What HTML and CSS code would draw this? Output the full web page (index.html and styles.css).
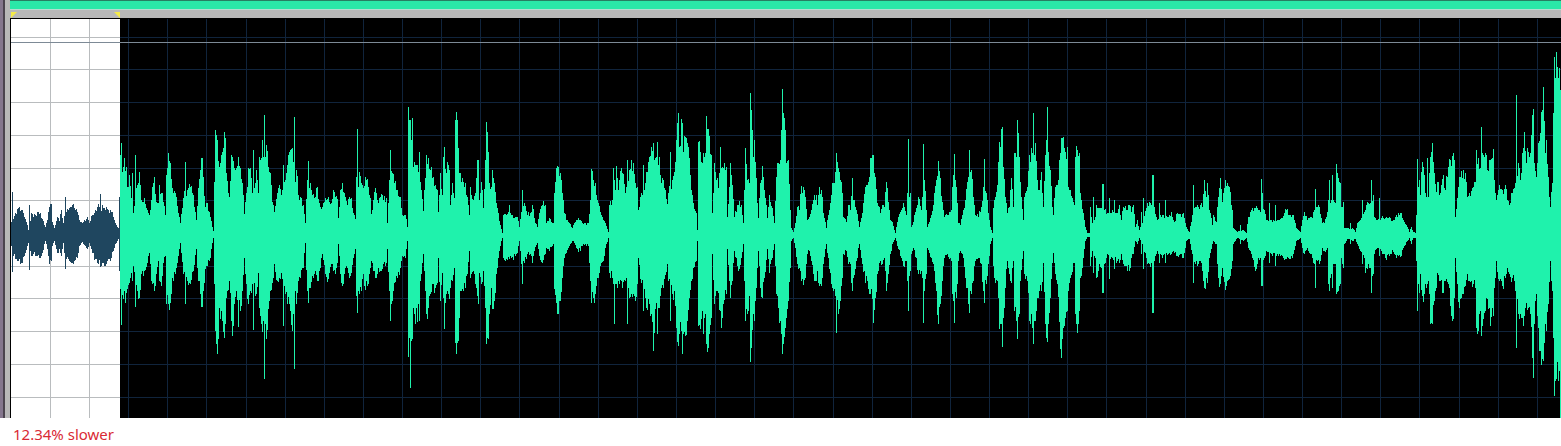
FILE: index.html
```html
<!DOCTYPE html>
<html lang="en">
<head>
<meta charset="utf-8">
<title>Waveform editor</title>
<link rel="stylesheet" href="styles.css">
</head>
<body>
<main class="editor">
  <div class="edge"></div>
  <div class="panel">
    <div class="overview"></div>
    <div class="ruler">
      <div class="range">
        <svg class="marker" viewBox="0 0 6 6" aria-hidden="true"><path d="M0 0H6L0 6Z"/></svg>
        <svg class="marker" viewBox="0 0 6 6" aria-hidden="true"><path d="M0 0H6V6Z"/></svg>
      </div>
    </div>
    <svg class="wave" viewBox="11 19 1550 399" preserveAspectRatio="none" role="img" aria-label="Audio waveform with selected range">
      <rect class="back" x="11" y="19" width="1550" height="399"/>
      <rect class="selection" x="11" y="19" width="109" height="399"/>
      <path class="grid" id="grid"/>
      <path class="grid-selected" id="grid-selected"/>
      <path class="limit" d="M11 42H1561V43H11Z"/>
      <path class="signal-selected" id="signal-selected"/>
      <path class="signal" id="signal"/>
    </svg>
  </div>
</main>
<p class="note">12.34% slower</p>
<script src="wave.js"></script>
</body>
</html>
```
FILE: styles.css
```css
body {
  margin: 0;
  background: #fff;
  font-family: "Noto Sans", "Open Sans", sans-serif;
}

.editor {
  display: flex;
  background: #b8b8b8;
}

.edge {
  box-sizing: border-box;
  width: 5px;
  margin-right: 5px;
  background: #84768d;
  border-right: 2px solid #4b444e;
}

.panel {
  flex: 1;
  min-width: 0;
}

.overview {
  box-sizing: border-box;
  height: 10px;
  background: #2ae8a8;
  border-top: 1px solid #287f63;
  border-bottom: 1px solid #b4ddd0;
}

.ruler {
  height: 8px;
  padding-left: 1px;
}

.range {
  display: flex;
  justify-content: space-between;
  width: 7%;
  padding-top: 2px;
}

.marker {
  display: block;
  width: 6px;
  height: 6px;
  fill: #f4ea48;
}

.wave {
  box-sizing: border-box;
  display: block;
  width: 100%;
  border-top: 1px solid #000;
  border-left: 1px solid #000;
  shape-rendering: crispEdges;
}

.selection { fill: #fff; }
.grid { fill: #10243c; }
.grid-selected { fill: #b9bcbe; }
.limit { fill: #7d8a96; }
.signal { fill: #1ff2ac; }
.signal-selected { fill: #1f465f; }

.note {
  margin: 0;
  padding: 6px 13px 0;
  color: #d92a34;
  font-size: 15px;
  line-height: 20px;
}
```
FILE: wave.js
```js
// Envelope points: x, top, bottom. A leading "!" marks a one-column peak.
const selected = `11 222 245;!12 192 271;12 218 251;15 213 258;18 208 260;22 210 262;24 217 255;27 225 245;28 230 242;!29 205 269;31 213 255;33 217 253;37 212 255;40 213 257;42 219 252;45 227 240;47 220 248;49 207 263;51 204 260;52 222 245;54 228 240;57 217 252;59 221 248;61 210 255;63 223 242;65 212 260;!65 197 268;68 210 258;71 207 262;74 208 260;77 212 257;79 220 245;82 223 241;85 221 245;87 217 248;89 223 242;92 215 252;95 210 258;97 207 262;!100 194 266;103 208 262;106 207 263;108 210 258;111 212 257;113 217 250;115 223 243;117 227 240;119 230 235;!119 197 270`;

const main = `120 155 288;!121 143 324;123 167 298;126 167 292;127 187 288;129 175 282;131 198 272;132 173 280;133 213 265;!135 155 306;137 185 290;139 172 297;141 200 273;144 198 270;147 210 262;149 215 252;151 200 280;153 183 282;154 177 290;156 202 273;158 203 260;159 185 280;161 193 285;163 202 262;165 215 255;166 175 303;168 153 303;170 163 302;172 188 277;175 193 273;178 213 255;180 223 242;183 198 273;!185 162 303;187 190 280;190 187 283;193 195 270;196 220 248;198 188 280;200 170 293;202 158 306;203 177 290;205 207 268;207 203 265;210 217 257;212 227 242;213 231 237
;214 182 283;215 130 330;216 135 343;217 140 353;219 167 307;221 155 310;222 152 320;224 132 337;225 138 323;226 173 297;229 197 280;231 155 320;232 157 335;234 168 303;236 168 290;!238 157 326;240 168 310;242 183 290;244 214 257;246 193 283;248 168 303;250 168 290;252 193 283;!253 150 329;256 170 293;258 193 272;259 157 307;261 158 323;262 140 331;263 157 320;!264 115 378;265 157 323;266 145 338;268 167 308;270 173 290;272 202 282;274 212 263;277 193 280;279 185 277;281 195 272;!283 165 325;285 180 293;287 165 303;290 150 310;292 148 330;293 162 313;!294 117 368;295 182 290;296 170 303;298 195 280;300 197 277;303 205 267;305 223 242;307 180 290;!308 161 302;310 183 287;312 195 275;315 197 270;317 187 280;319 203 270;322 207 253;325 198 273;328 197 278
;331 203 263;333 190 270;335 197 273;337 199 262;338 218 243;340 190 273;342 183 285;344 193 273;347 205 267;349 197 277;351 198 272;353 213 257;355 219 248;356 177 295;!357 129 312;358 187 290;359 172 293;361 183 290;363 188 273;365 177 289;368 187 283;370 198 267;371 214 260;373 200 270;375 188 277;377 200 273;380 197 270;383 200 263;386 198 262;387 223 248;389 180 290;!390 150 320;392 173 300;394 183 282;397 190 277;400 197 267;402 215 255;405 215 257;407 227 240
;408 107 356;409 120 337;410 120 387;411 140 340;412 118 338;413 167 307;415 165 323;416 165 307;417 165 321;418 172 303;!419 152 320;421 190 273;423 211 253;425 178 290;426 155 313;428 158 307;430 170 293;432 178 283;435 185 287;437 190 282;438 212 257;440 173 300;442 195 272;443 157 297;444 147 328;446 173 293;447 162 290;449 170 298;450 205 287;452 183 280;454 198 267;455 120 342;457 120 342;458 148 340;459 173 317;460 173 290;462 178 288;465 183 287;467 197 273;469 215 250;470 187 277;473 200 270;475 193 283;477 160 295;478 160 303;479 200 272;481 182 283;483 208 270;485 160 307;486 122 343;488 152 338;489 183 313;491 187 287;492 170 308;494 183 300;496 203 273;498 213 257;500 225 245;502 233 237
;503 215 257;506 215 258;509 205 258;511 215 257;515 217 255;517 217 252;519 227 240;521 212 263;!522 190 283;524 203 262;527 215 253;530 213 253;532 205 262;534 218 250;537 227 242;539 213 255;542 205 262;545 205 253;546 223 247;549 218 250;553 223 243;554 193 288;556 168 302;558 167 313;560 173 300;562 193 277;564 213 257;568 222 247;572 228 240;574 223 242;578 218 251;583 224 243;588 223 245;590 200 280;591 169 302;593 180 297;595 183 293;597 200 277;600 212 265;603 220 260;605 223 247;608 232 237
;609 205 272;612 200 277;613 168 283;614 180 323;615 190 283;616 166 283;618 190 280;619 180 283;622 173 287;625 193 280;626 187 277;!627 160 323;629 170 297;631 160 293;633 163 293;635 183 300;637 187 283;638 210 257;641 193 282;!643 165 310;644 190 288;646 172 307;649 157 303;651 147 313;653 143 350;655 158 308;!657 142 333;659 157 307;661 183 287;663 180 287;667 204 263;668 193 280;!670 152 320;672 180 293;674 172 290;676 140 327;678 113 345;679 147 333;681 119 330;682 123 353;683 152 333;685 137 335;687 143 320;689 158 297;691 190 280;693 203 267;696 213 260;697 230 240
;698 142 325;700 152 328;702 163 310;703 153 333;705 153 313;706 116 343;708 129 347;711 155 317;712 213 253;714 163 303;716 180 290;718 188 292;720 147 310;721 168 327;723 168 303;726 167 293;727 217 248;729 187 280;730 163 297;732 185 280;734 217 250;737 205 265;738 205 270;741 205 257;743 223 243;745 148 320;747 180 313;749 183 295;750 93 361;751 110 347;753 157 313;754 140 320;755 162 300;757 203 267;758 218 250;760 183 287;762 166 297;764 190 277;767 218 248;769 195 272;772 208 257;774 223 243;776 177 293;778 163 307;780 160 320;781 130 333;782 89 353;783 113 343;785 130 327;786 163 317;788 160 300;790 210 267;791 228 240;793 232 237
;795 223 247;797 207 263;799 210 267;801 186 280;803 187 284;805 197 277;807 220 253;809 217 250;811 210 260;813 200 273;816 195 280;817 205 270;819 187 285;821 190 285;823 213 263;826 228 243;828 215 257;830 203 272;832 183 287;834 183 288;835 172 295;!836 153 332;838 168 313;840 180 300;842 193 277;843 217 253;846 222 250;848 205 263;850 210 263;852 178 290;853 200 277;856 210 260;859 227 243;862 213 263;865 187 282;867 185 280;869 177 293;870 158 293;872 155 298;873 155 322;875 177 297;877 203 273;880 213 260
;882 205 263;884 207 257;886 182 290;888 202 273;890 220 253;892 222 243;895 233 237;897 222 245;901 210 257;903 203 265;906 215 260;907 193 280;!908 139 310;910 193 270;911 227 253;913 222 247;916 208 257;918 197 273;921 210 270;922 197 277;!923 144 322;924 180 290;926 210 273;927 227 247;931 215 257;933 205 263;936 180 290;938 161 323;940 178 303;942 202 280;944 217 257;947 215 253;951 210 260;952 187 293;953 175 300;!954 154 322;956 187 297;958 223 260;960 225 250;963 210 257;965 200 277;967 182 287;968 177 303;!969 150 312;971 170 293;973 197 280;975 215 260;978 217 257;981 207 263;983 187 290;!984 159 302;986 193 283;988 213 263;990 227 243;992 233 237
;993 208 265;995 197 282;997 185 280;999 142 328;1000 147 323;1002 127 346;1003 167 317;1005 197 287;1007 213 260;1009 207 273;1011 178 282;1013 207 260;1014 153 310;1016 157 320;1017 120 338;1019 157 313;1020 182 280;1023 220 250;1024 197 273;1027 187 280;1029 155 320;1032 153 327;!1033 113 343;1034 155 320;1035 143 320;1037 180 297;1039 190 290;1041 172 290;1043 207 262;1045 155 323;1046 140 337;1047 107 341;1048 152 323;1050 170 297;1052 207 262;1053 215 252;1055 187 273;1057 185 283;1060 153 348;1062 138 338;1063 137 327;1065 152 317;1067 147 310;1068 187 290;1070 190 277;1074 205 262;1075 157 313;1076 146 323;1077 150 332;1079 153 310;1080 193 277;1083 213 257;1085 227 240;1087 233 236;1089 233 236
;1090 207 265;1092 223 250;!1093 197 272;1095 217 257;1096 205 277;1099 208 263;1101 208 267;!1102 184 292;!1103 184 292;1104 210 263;1107 213 253;!1109 198 278;1112 210 257;!1114 200 268;1117 213 260;1119 205 262;1121 220 253;1123 207 263;1126 210 265;1129 205 270;1131 212 257;1133 205 253;1135 227 240;1137 220 243;1139 230 237;!1141 212 253;1142 223 243;!1143 198 268;1147 203 263;1151 205 262;!1152 175 312;!1153 175 312;1154 207 260;1157 220 250;!1159 203 262;1162 215 257;!1165 200 262;1168 217 253;1171 212 253;1174 222 252;1177 213 255;1181 217 253;1183 213 257;1186 227 240;1189 232 238;1192 215 253;!1193 185 282;1195 207 263;1198 207 263;1200 205 260;1202 207 270;1204 180 287;1206 197 277;1207 183 282;1209 210 257;1212 225 243;1213 215 240;1216 222 243;1218 197 277;1220 178 283;1222 202 267;1225 180 289;1227 183 280;1229 187 278;1232 210 260;1233 228 243
;1237 232 237;!1240 225 243;1243 230 240;1246 233 237;1248 217 247;1252 208 257;1255 208 270;1258 210 257;1260 212 257;!1261 179 285;!1262 193 285;1264 210 257;1266 220 250;!1269 203 262;1271 220 253;!1275 205 265;1277 220 253;1282 218 255;1286 210 258;1290 215 258;1293 215 253;1296 228 240;1300 232 237;1302 220 247;1304 212 253;1307 220 247;1312 218 257;1314 210 263;!1315 189 287;1317 207 260;1319 207 263;1322 223 247;1324 223 250;1327 212 247;1328 200 283;!1329 180 290;1331 200 273;1332 175 287;1333 200 263;1335 203 263;1336 164 293;1338 178 290;1340 183 283;1341 207 257;1343 202 267;1344 228 243;1347 228 238;!1350 223 243;1352 228 240;1355 232 238;1357 223 243;1360 220 250;!1362 200 263;1364 212 257;1365 210 272;1368 203 263;1370 203 267;!1371 180 292;1373 195 273;1374 217 253;1377 220 247;!1379 198 255;1381 218 250;1385 218 257;1389 217 255;1392 221 249;1396 215 257;1401 213 255;1403 220 247;1407 227 240;1409 232 237;1411 227 243;1413 232 237;1415 233 237
;1416 215 260;!1417 159 310;1419 180 292;1420 195 273;1422 162 295;1424 175 293;1425 193 283;!1427 158 283;1428 197 280;1429 173 293;1430 157 323;1432 143 323;1434 173 300;1436 192 287;1437 182 272;1440 193 280;1443 175 292;1445 190 280;1448 167 283;1450 160 305;1452 156 320;1454 160 297;1455 217 257;1457 198 283;1459 177 307;1462 178 293;1463 170 293;1465 173 285;1467 197 273;1469 193 280;1473 187 283;1475 182 287;1476 150 327;1478 158 330;1480 168 310;!1481 127 335;1483 155 318;1485 153 310;1487 170 298;1489 160 307;1490 160 325;1492 158 307;1493 149 315;1494 180 287;1496 200 260;1498 190 278;1502 190 285;1505 185 277;1507 200 267;1509 205 273;1512 193 277;1514 188 280;1515 183 290;!1516 95 347;1518 163 313;1520 180 313;1522 153 317;1523 148 325;!1524 132 310;1526 163 302;1528 152 307;1530 153 313;1532 115 357;1533 109 377;1534 163 323;1536 177 293;1538 143 327;1540 133 350;1542 110 358;1543 87 360;1545 153 323;1546 140 330;1548 177 303;1550 207 260;1551 192 280;1552 183 290;1553 113 337;1554 57 395;1555 78 380;1556 52 378;1558 78 380;1559 68 370;1560 90 417`;

const bar = (x, top, bottom) => `M${x} ${top}h1V${bottom + 1}h-1Z`;

// Repeatable noise in the range -1 to 1.
const noise = n => {
  const v = Math.sin(n * 12.9898) * 43758.5453;
  return (v - Math.floor(v)) * 2 - 1;
};

function draw(id, text) {
  let path = "";
  let last = null;
  for (const token of text.split(";")) {
    const item = token.trim();
    const [x, top, bottom] = item.replace("!", "").split(" ").map(Number);
    if (item[0] === "!") {
      path += bar(x, top, bottom);
      continue;
    }
    if (last) {
      for (let c = last[0] + 1; c < x; c++) {
        const k = (c - last[0]) / (x - last[0]);
        const t = last[1] + (top - last[1]) * k;
        const b = last[2] + (bottom - last[2]) * k;
        path += bar(c,
          Math.round(t + (234 - t) * 0.13 * noise(c)),
          Math.round(b - (b - 234) * 0.13 * noise(c + 0.5)));
      }
    }
    path += bar(x, top, bottom);
    last = [x, top, bottom];
  }
  document.getElementById(id).setAttribute("d", path);
}

function grid(id, from, to) {
  let path = "";
  for (let i = 1; i < 40; i++) {
    const x = Math.round(10.8 + i * 39.13);
    if (x >= from && x < to) path += `M${x} 19h1V418h-1Z`;
  }
  for (let i = 0; i < 12; i++) {
    path += `M${from} ${Math.round(36.7 + i * 32.72)}H${to}v1H${from}Z`;
  }
  document.getElementById(id).setAttribute("d", path);
}

grid("grid-selected", 11, 120);
grid("grid", 120, 1561);
draw("signal-selected", selected);
draw("signal", main);
```
